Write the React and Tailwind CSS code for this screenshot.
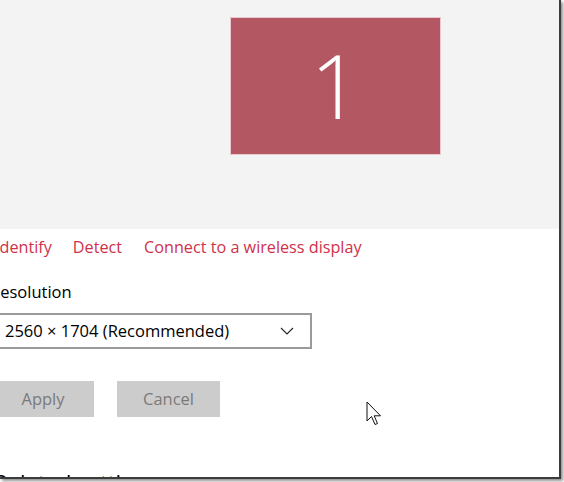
import React from 'react';

const font = { fontFamily: '"Open Sans", "Noto Sans", sans-serif' };

const Cursor = () => (
  <svg width="20" height="30" viewBox="0 0 20 30" className="absolute left-[366px] top-[401px]">
    <path
      d="M1 1 L1 20 L5.5 15.5 L9 23.5 L11.5 22.5 L8.2 14.8 L14.5 14.8 Z"
      fill="white"
      stroke="#111"
      strokeWidth="1"
      strokeLinejoin="miter"
    />
  </svg>
);

export default function App() {
  return (
    <div className="relative w-[564px] h-[482px] overflow-hidden bg-white" style={font}>
      {/* window frame */}
      <div className="w-[561px] h-[479px] overflow-hidden bg-white border-r-2 border-b-2 border-[#3c3c3c] shadow-[2px_2px_3px_rgba(0,0,0,0.45)]">
        {/* display arrangement area */}
        <div className="h-[229px] bg-[#f3f3f3] pt-[17px]">
          <div className="ml-[230px] w-[211px] h-[138px] bg-[#b35763] border border-[#e9c9ce] flex items-center justify-center">
            <span className="text-white text-[88px] font-light leading-none -mt-[2px]">1</span>
          </div>
        </div>

        {/* links */}
        <div className="flex mt-[7px] -ml-[5px] text-[16.2px] text-[#d0314a] leading-[22px]">
          <span>Identify</span>
          <span className="ml-[21px]">Detect</span>
          <span className="ml-[22px]">Connect to a wireless display</span>
        </div>

        {/* resolution */}
        <div className="-ml-[10px] mt-[23px] text-[16.5px] text-black leading-[22px]">Resolution</div>
        <div className="-ml-[10px] mt-[10px] w-[322px] h-[36px] border-2 border-[#9a9a9a] flex items-center justify-between pl-[13px] pr-[16px] text-[16.5px] text-black">
          <span>2560 × 1704 (Recommended)</span>
          <svg width="14" height="8" viewBox="0 0 14 8">
            <path d="M1 1 L7 7 L13 1" fill="none" stroke="#222" strokeWidth="1.1" />
          </svg>
        </div>

        {/* buttons */}
        <div className="flex gap-[23px] mt-[32px] -ml-[20px]">
          <div className="w-[114px] h-[36px] bg-[#cccccc] text-[#7a7a7a] text-[16.5px] flex items-center justify-center pl-[12px]">Apply</div>
          <div className="w-[103px] h-[36px] bg-[#cccccc] text-[#7a7a7a] text-[16.5px] flex items-center justify-center">Cancel</div>
        </div>

        {/* related settings, cut off */}
        <div className="-ml-[6px] mt-[50px] text-[22px] text-black leading-[30px]">Related settings</div>
      </div>
      <Cursor />
    </div>
  );
}
